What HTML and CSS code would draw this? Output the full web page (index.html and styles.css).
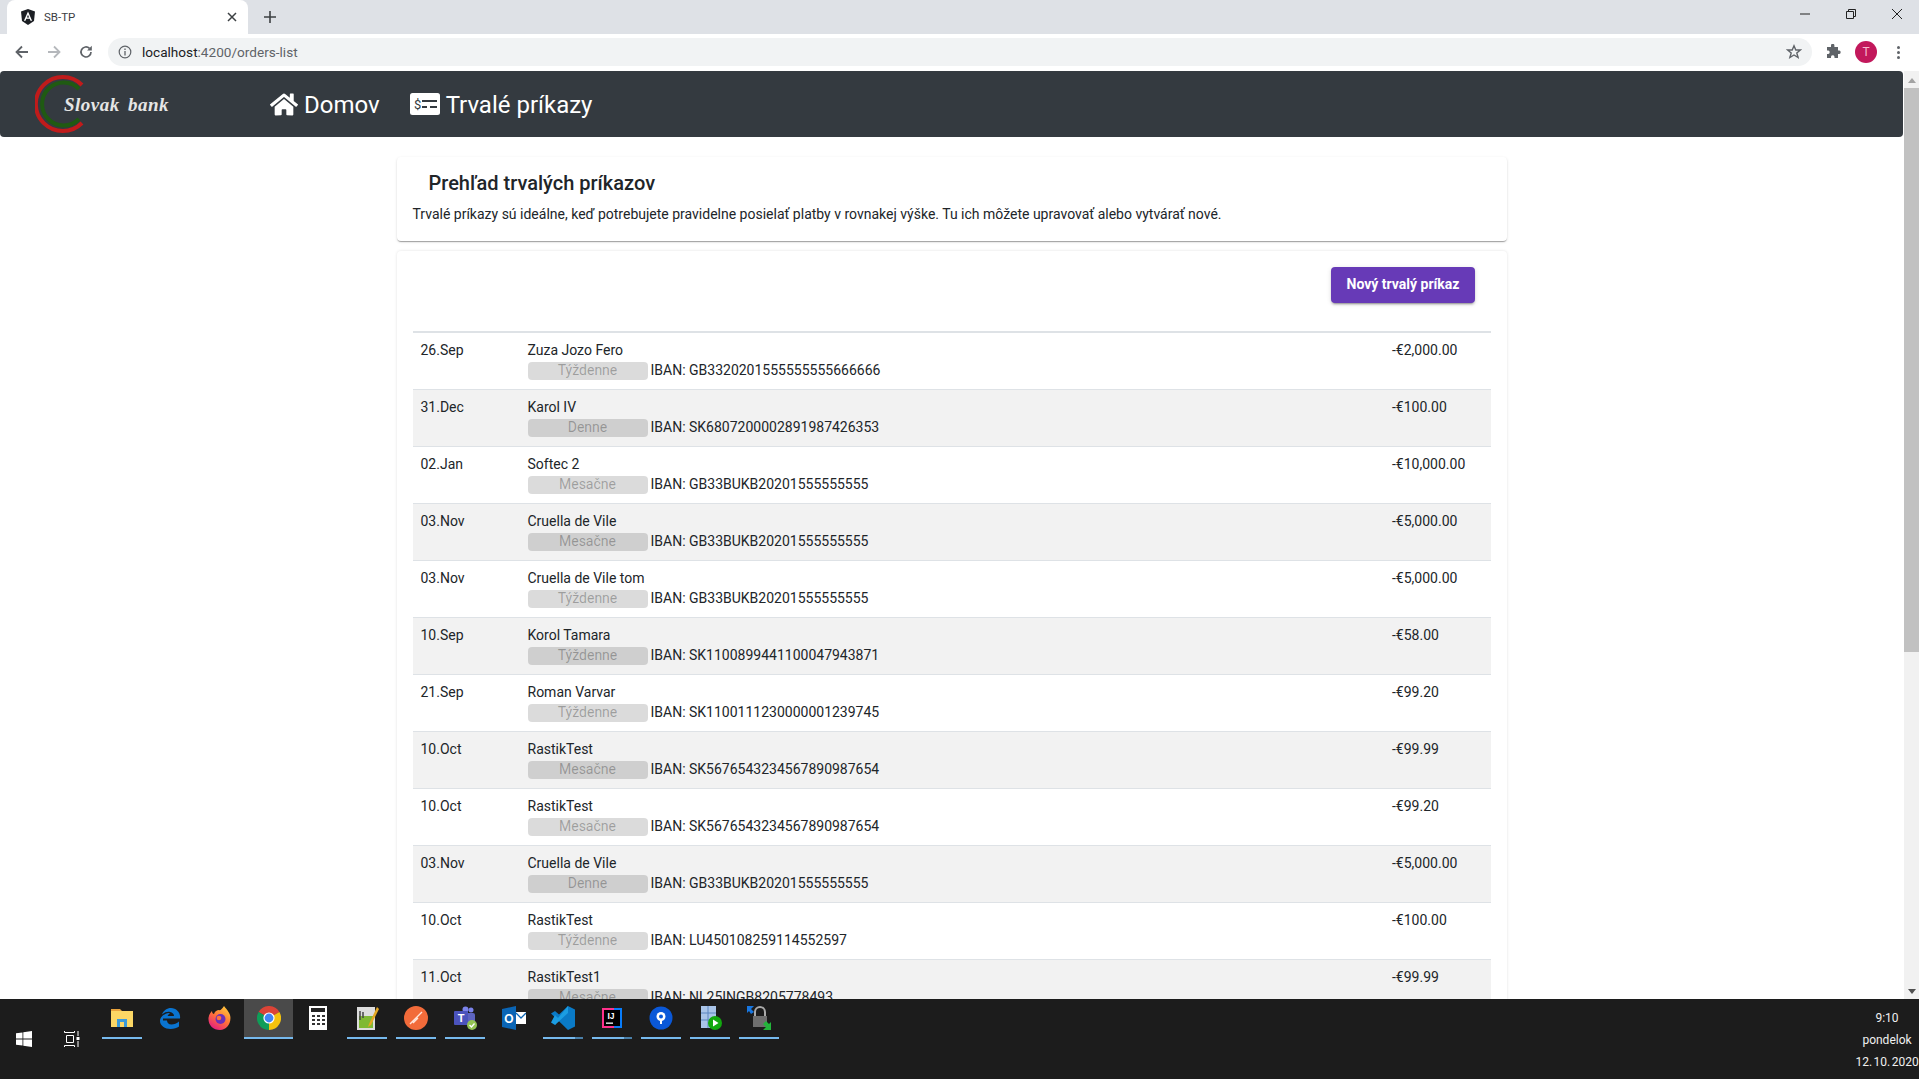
FILE: index.html
```html
<!DOCTYPE html>
<html>
<head>
<meta charset="utf-8">
<title>SB-TP</title>
<link rel="stylesheet" href="styles.css">
</head>
<body>
<div class="tabstrip">
  <div class="tab">
    <svg class="favicon" viewBox="0 0 16 16"><path d="M8 0 15 2.500 14 12 8 16 2 12 1 2.500Z" fill="#1c1f24"/><path d="M8 2.600 3.900 11.800H5.500L6.300 9.800H9.700L10.500 11.800H12.100ZM6.900 8.500 8 5.800 9.100 8.500Z" fill="#fff"/></svg>
    <span class="tabtitle">SB-TP</span>
    <svg class="tabclose" viewBox="0 0 10 10"><path d="M1 1 9 9M9 1 1 9" stroke="#3c4043" stroke-width="1.500"/></svg>
  </div>
  <svg class="newtab" viewBox="0 0 12 12"><path d="M6 0V12M0 6H12" stroke="#3c4043" stroke-width="1.600"/></svg>
  <div class="winbtns">
    <svg viewBox="0 0 12 12"><path d="M1 6H11" stroke="#222" stroke-width="1"/></svg>
    <svg viewBox="0 0 12 12"><path d="M1.500 3.500H8.500V10.500H1.500ZM3.500 3.500V1.500H10.500V8.500H8.500" fill="none" stroke="#222"/></svg>
    <svg viewBox="0 0 12 12"><path d="M1 1 11 11M11 1 1 11" stroke="#222"/></svg>
  </div>
</div>
<div class="toolbar">
  <svg class="navicon" viewBox="0 0 16 16"><path d="M14 8H3M8 2.500 2.500 8 8 13.500" fill="none" stroke="#5f6368" stroke-width="1.800"/></svg>
  <svg class="navicon" viewBox="0 0 16 16"><path d="M2 8H13M8 2.500 13.500 8 8 13.500" fill="none" stroke="#b5b8bc" stroke-width="1.800"/></svg>
  <svg class="navicon" viewBox="0 0 16 16"><path d="M13 8A5 5 0 1 1 11.500 4.400" fill="none" stroke="#5f6368" stroke-width="1.700"/><path d="M13.800 1.800V6.500H9.100Z" fill="#5f6368"/></svg>
  <div class="omnibox">
    <svg class="infoicon" viewBox="0 0 14 14"><circle cx="7" cy="7" r="5.800" fill="none" stroke="#5f6368" stroke-width="1.200"/><path d="M7 6V10.500M7 3.500V5" stroke="#5f6368" stroke-width="1.300"/></svg>
    <span class="url"><b>localhost</b>:4200/orders-list</span>
    <svg class="staricon" viewBox="0 0 16 16"><path d="M8 1.800 9.800 6H14.400L10.800 8.900 12.100 13.500 8 11 3.900 13.500 5.200 8.900 1.600 6H6.200Z" fill="none" stroke="#5f6368" stroke-width="1.400"/></svg>
  </div>
  <svg class="exticon" viewBox="0 0 16 16"><path d="M6 1.500A1.700 1.700 0 0 1 9.400 1.500V3H13V6.500H14.300A1.800 1.800 0 0 1 14.300 10H13V14H9.500V12.700A1.800 1.800 0 0 0 6 12.700V14H2V10H3.300A1.800 1.800 0 0 0 3.300 6.500H2V3H6Z" fill="#5f6368"/></svg>
  <div class="avatar">T</div>
  <div class="menudots"><i></i><i></i><i></i></div>
</div>
<div class="viewport">
  <div class="page">
    <div class="navbar">
      <div class="brand">
        <svg class="brandmark" viewBox="0 0 56 60"><path d="M47 11A27 27 0 1 0 47 49" fill="none" stroke="#c01b1b" stroke-width="4"/><path d="M44 15A21.500 21.500 0 1 0 44 45" fill="none" stroke="#1f5a12" stroke-width="4"/></svg>
        <span class="brandname">Slovak bank</span>
      </div>
      <a class="navlink homelink"><svg class="homeicon" viewBox="0 0 576 512"><path fill="#fff" d="M280.370 148.260L96 300.110V464a16 16 0 0 0 16 16l112.060-.29a16 16 0 0 0 15.920-16V368a16 16 0 0 1 16-16h64a16 16 0 0 1 16 16v95.640a16 16 0 0 0 16 16.050L464 480a16 16 0 0 0 16-16V300L295.670 148.260a12.190 12.190 0 0 0-15.300 0zM571.600 251.470L488 182.560V44.050a12 12 0 0 0-12-12h-56a12 12 0 0 0-12 12v72.610L318.470 43a48 48 0 0 0-61 0L4.340 251.470a12 12 0 0 0-1.600 16.900l25.500 31A12 12 0 0 0 45.150 301l235.220-193.740a12.190 12.190 0 0 1 15.300 0L530.900 301a12 12 0 0 0 16.900-1.600l25.500-31a12 12 0 0 0-1.700-16.930z"/></svg>Domov</a>
      <a class="navlink"><svg class="checkicon" viewBox="0 0 30 22"><rect width="30" height="22" rx="2.500" fill="#fff"/><text x="4" y="15.500" class="dollar">$</text><path d="M12 8H27M12 14H17M20 14H27" stroke="#343a40" stroke-width="2"/></svg>Trvalé príkazy</a>
    </div>
    <div class="content">
      <div class="card introcard">
        <h2>Prehľad trvalých príkazov</h2>
        <p>Trvalé príkazy sú ideálne, keď potrebujete pravidelne posielať platby v rovnakej výške. Tu ich môžete upravovať alebo vytvárať nové.</p>
      </div>
      <div class="card listcard">
        <div class="actions"><button class="newbtn">Nový trvalý príkaz</button></div>
        <table class="orders">
          <tbody>
            <tr><td class="date">26.Sep</td><td><div class="name">Zuza Jozo Fero</div><div class="detail"><span class="badge">Týždenne</span>IBAN: GB3320201555555555666666</div></td><td class="amount">-€2,000.00</td></tr>
            <tr><td class="date">31.Dec</td><td><div class="name">Karol IV</div><div class="detail"><span class="badge">Denne</span>IBAN: SK6807200002891987426353</div></td><td class="amount">-€100.00</td></tr>
            <tr><td class="date">02.Jan</td><td><div class="name">Softec 2</div><div class="detail"><span class="badge">Mesačne</span>IBAN: GB33BUKB20201555555555</div></td><td class="amount">-€10,000.00</td></tr>
            <tr><td class="date">03.Nov</td><td><div class="name">Cruella de Vile</div><div class="detail"><span class="badge">Mesačne</span>IBAN: GB33BUKB20201555555555</div></td><td class="amount">-€5,000.00</td></tr>
            <tr><td class="date">03.Nov</td><td><div class="name">Cruella de Vile tom</div><div class="detail"><span class="badge">Týždenne</span>IBAN: GB33BUKB20201555555555</div></td><td class="amount">-€5,000.00</td></tr>
            <tr><td class="date">10.Sep</td><td><div class="name">Korol Tamara</div><div class="detail"><span class="badge">Týždenne</span>IBAN: SK1100899441100047943871</div></td><td class="amount">-€58.00</td></tr>
            <tr><td class="date">21.Sep</td><td><div class="name">Roman Varvar</div><div class="detail"><span class="badge">Týždenne</span>IBAN: SK1100111230000001239745</div></td><td class="amount">-€99.20</td></tr>
            <tr><td class="date">10.Oct</td><td><div class="name">RastikTest</div><div class="detail"><span class="badge">Mesačne</span>IBAN: SK5676543234567890987654</div></td><td class="amount">-€99.99</td></tr>
            <tr><td class="date">10.Oct</td><td><div class="name">RastikTest</div><div class="detail"><span class="badge">Mesačne</span>IBAN: SK5676543234567890987654</div></td><td class="amount">-€99.20</td></tr>
            <tr><td class="date">03.Nov</td><td><div class="name">Cruella de Vile</div><div class="detail"><span class="badge">Denne</span>IBAN: GB33BUKB20201555555555</div></td><td class="amount">-€5,000.00</td></tr>
            <tr><td class="date">10.Oct</td><td><div class="name">RastikTest</div><div class="detail"><span class="badge">Týždenne</span>IBAN: LU450108259114552597</div></td><td class="amount">-€100.00</td></tr>
            <tr><td class="date">11.Oct</td><td><div class="name">RastikTest1</div><div class="detail"><span class="badge">Mesačne</span>IBAN: NL25INGB8205778493</div></td><td class="amount">-€99.99</td></tr>
          </tbody>
        </table>
      </div>
    </div>
  </div>
  <div class="scrollbar">
    <div class="arrow up"></div>
    <div class="thumb"></div>
    <div class="arrow down"></div>
  </div>
</div>
<div class="taskbar">
  <div class="startbtn"><svg viewBox="0 0 16 16"><path fill="#fff" d="M0 2.300 6.500 1.400V7.600H0ZM7.300 1.300 16 0V7.600H7.300ZM0 8.400H6.500V14.600L0 13.700ZM7.300 8.400H16V16L7.300 14.700Z"/></svg></div>
  <div class="startbtn"><svg viewBox="0 0 16 16"><path fill="none" stroke="#fff" stroke-width="1" d="M.500 0V1.500H10.500V0M2.500 4.500H9.500V11.500H2.500ZM.500 16V14.500H10.500V16M14 0V5M14 10V16"/><rect x="12.500" y="6" width="3" height="3" fill="#fff"/></svg></div>
  <div class="tile open">
    <svg viewBox="0 0 24 24"><path d="M1 3H10L12 5H1Z" fill="#e8a33d"/><rect x="1" y="5" width="22" height="16" fill="#fbd765"/><path d="M7 21V13H17V21H14V16H10V21Z" fill="#3a9ad9"/></svg>
  </div>
  <div class="tile">
    <svg viewBox="0 0 24 24"><path d="M4 12.500H21C22 7 17.500 2 12 2 8 2 4.500 4.500 3 8.500 6 6 9 5.500 11 6 13.500 6.500 15 8 15 10H8.500C9.500 8.500 10 8 11 7 6 7 1 10.500 1 15 1 19.500 6 23 11.500 23 15 23 18 22 20 20.500V15.500C18 17.300 15 18.500 12.500 18.500 9.500 18.500 8 16.500 8 14.500H4Z" fill="#0a74d0"/></svg>
  </div>
  <div class="tile">
    <svg viewBox="0 0 24 24"><defs><linearGradient id="fxg" x1="0.800" y1="0" x2="0.200" y2="1"><stop offset="0" stop-color="#ffca3a"/><stop offset="0.500" stop-color="#ff7139"/><stop offset="1" stop-color="#e31587"/></linearGradient></defs><path d="M16 0C18 3 20 4 22 9 24 16 19 24 12 24 5 24 0 19 .500 12 1 8 3 6 4 5 4 7 5 8 6 8 7 5 9 4 11 4 12 5 14 3 16 0Z" fill="url(#fxg)"/><circle cx="12.500" cy="13" r="5" fill="#6b2fb8"/><circle cx="11" cy="12" r="2.300" fill="#ff7139"/></svg>
  </div>
  <div class="tile active">
    <svg viewBox="0 0 30 30"><path d="M2 7.500A15 15 0 0 1 28 7.500L15 15Z" fill="#db4437"/><path d="M28 7.500A15 15 0 0 1 15 30L15 15Z" fill="#f4c20d"/><path d="M15 30A15 15 0 0 1 2 7.500L15 15Z" fill="#0f9d58"/><circle cx="15" cy="15" r="7" fill="#fff"/><circle cx="15" cy="15" r="5.500" fill="#4285f4"/></svg>
  </div>
  <div class="tile">
    <svg viewBox="0 0 24 24"><rect x="3" width="18" height="24" fill="#fff"/><rect x="5" y="2" width="14" height="4" fill="#222"/><path d="M6 9H9V11H6ZM11 9H14V11H11ZM16 9H19V11H16ZM6 13H9V15H6ZM11 13H14V15H11ZM16 13H19V15H16ZM6 17H9V19H6ZM11 17H14V19H11ZM16 17H19V19H16Z" fill="#333"/></svg>
  </div>
  <div class="tile open">
    <svg viewBox="0 0 24 24"><rect x="2" y="1" width="18" height="23" fill="#ddd"/><rect x="4" y="10" width="14" height="12" fill="#7fb934"/><path d="M5 5V14M8 6V12" stroke="#444" stroke-width="1.500"/><path d="M22 1 14 18 13 21 16 19 24 3Z" fill="#e5a823"/></svg>
  </div>
  <div class="tile open">
    <svg viewBox="0 0 24 24"><circle cx="12" cy="12" r="12" fill="#f26b3a"/><path d="M6 18 18 6M9 17 14 12" stroke="#ffe6dc" stroke-width="1.400"/></svg>
  </div>
  <div class="tile open">
    <svg viewBox="0 0 24 24"><circle cx="18" cy="4" r="2.500" fill="#7b83eb"/><circle cx="12.500" cy="3.500" r="3" fill="#7b83eb"/><rect x="13" y="7" width="9" height="12" rx="2" fill="#5d64c0"/><rect x="1" y="5" width="14" height="14" rx="1" fill="#4b53bc"/><text x="8" y="16" class="teamst">T</text><circle cx="19" cy="19" r="5" fill="#92c353"/><path d="M16.500 19 18.500 21 21.500 17.500" fill="none" stroke="#fff" stroke-width="1.300"/></svg>
  </div>
  <div class="tile">
    <svg viewBox="0 0 24 24"><path d="M0 3 14 0V24L0 21Z" fill="#0a65b5"/><text x="7" y="16.500" class="outlooko">O</text><rect x="14" y="6" width="10" height="12" fill="#fff"/><path d="M14 7 19 12 24 7" fill="none" stroke="#0a65b5" stroke-width="1.300"/></svg>
  </div>
  <div class="tile open part">
    <svg viewBox="0 0 24 24"><path d="M17 0 24 3.500V20.500L17 24 0 7.500 4 5 8 8.500Z" fill="#0a7ac6"/><path d="M17 24 0 16.500 4 19 17 7V0L7 12 4 9 0 16.500Z" fill="#1b9de2"/></svg>
  </div>
  <div class="tile open part">
    <svg viewBox="0 0 24 24"><path d="M2 2H14V4H4V20H14V22H2Z" fill="#ff318c"/><path d="M14 2H22V22H14V20H20V4H14Z" fill="#087cfa"/><rect x="4" y="4" width="16" height="16" fill="#000"/><text x="11" y="13" class="ideatext">IJ</text><rect x="6" y="16.500" width="7" height="1.300" fill="#fff"/></svg>
  </div>
  <div class="tile open">
    <svg viewBox="0 0 24 24"><circle cx="12" cy="12" r="11.500" fill="#0a58d8"/><circle cx="12" cy="10.500" r="4.500" fill="#fff"/><circle cx="12" cy="10.500" r="2" fill="#0a58d8"/><rect x="11" y="14" width="2" height="4" fill="#fff"/></svg>
  </div>
  <div class="tile open">
    <svg viewBox="0 0 24 24"><rect x="3" y="0" width="15" height="22" fill="#a9c4e8"/><path d="M3 7H18M3 14H18M10 0V22" stroke="#5c86c0"/><circle cx="17" cy="17" r="7" fill="#12a90f"/><path d="M15 13.500 20.500 17 15 20.500Z" fill="#fff"/></svg>
  </div>
  <div class="tile open">
    <svg viewBox="0 0 24 24"><path d="M0 0H7L4 3 7 6 4 8 2 5 0 7Z" fill="#1776e0"/><path d="M8 11V6A5 5 0 0 1 18 6V11" fill="none" stroke="#aaa" stroke-width="2"/><rect x="6" y="10" width="14" height="11" fill="#6e6e6e"/><path d="M24 24H16L19 21 16 18 19 15 22 18 24 16Z" fill="#22b53a"/></svg>
  </div>
  <div class="clock"><span>9:10</span><span>pondelok</span><span>12. 10. 2020</span></div>
</div>
</body>
</html>
```

FILE: styles.css
```css
* {
  box-sizing: border-box;
}
html, body {
  margin: 0;
  height: 100%;
  overflow: hidden;
}
body {
  display: flex;
  flex-direction: column;
  font-family: Roboto, "Liberation Sans", sans-serif;
  font-size: 14px;
  color: #212529;
  background: #fff;
}

/* browser chrome */
.tabstrip {
  display: flex;
  align-items: flex-end;
  height: 34px;
  padding-left: 7px;
  background: #dee1e6;
  flex: none;
}
.tab {
  display: flex;
  align-items: center;
  width: 241px;
  height: 34px;
  padding: 0 11px 0 13px;
  background: #fff;
  border-radius: 8px 8px 0 0;
}
.favicon {
  width: 16px;
  height: 16px;
}
.tabtitle {
  flex: 1;
  margin-left: 8px;
  font-size: 11.5px;
  color: #3c4043;
}
.tabclose {
  width: 10px;
  height: 10px;
}
.newtab {
  width: 12px;
  height: 12px;
  margin: 0 auto 11px 16px;
}
.winbtns {
  display: flex;
  gap: 34px;
  align-self: flex-start;
  padding: 8px 16px 0 0;
}
.winbtns svg {
  width: 12px;
  height: 12px;
}
.toolbar {
  display: flex;
  align-items: center;
  height: 36px;
  padding-left: 14px;
  flex: none;
  background: #fff;
}
.navicon {
  width: 16px;
  height: 16px;
  margin-right: 16px;
}
.omnibox {
  display: flex;
  align-items: center;
  width: 1704px;
  height: 28px;
  margin-left: -2px;
  padding: 0 10px 0 10px;
  background: #f1f3f4;
  border-radius: 14px;
}
.infoicon {
  width: 14px;
  height: 14px;
}
.url {
  flex: 1;
  margin-left: 10px;
  font-size: 13.6px;
  color: #5f6368;
}
.url b {
  font-weight: 400;
  color: #202124;
}
.staricon {
  width: 16px;
  height: 16px;
}
.exticon {
  width: 16px;
  height: 16px;
  margin-left: 13px;
}
.avatar {
  width: 22px;
  height: 22px;
  margin-left: 14px;
  border-radius: 50%;
  background: #c2185b;
  color: #f8bbd0;
  font-size: 12px;
  line-height: 22px;
  text-align: center;
}
.menudots {
  display: flex;
  flex-direction: column;
  gap: 2px;
  margin-left: 20px;
}
.menudots i {
  width: 3px;
  height: 3px;
  border-radius: 50%;
  background: #5f6368;
}

/* page */
.viewport {
  display: flex;
  flex: 1;
  min-height: 0;
  margin-top: 1px;
}
.page {
  flex: 1;
  min-width: 0;
  overflow: hidden;
}
.navbar {
  display: flex;
  align-items: center;
  height: 66px;
  padding: 2px 0 0 35px;
  background: #343a40;
  border-radius: 4px;
}
.navbar svg {
  margin-top: -2px;
}
.brand {
  display: flex;
  align-items: center;
  width: 235px;
}
.brandmark {
  width: 56px;
  height: 60px;
  flex: none;
}
.brandname {
  margin-left: -27px;
  font-family: "Liberation Serif", serif;
  font-size: 19px;
  font-style: italic;
  font-weight: 700;
  letter-spacing: .5px;
  word-spacing: 3px;
  color: #e6e6e6;
}
.navlink {
  display: flex;
  align-items: center;
  margin-right: 30px;
  font-size: 24px;
  color: #fff;
}
.homeicon {
  width: 28px;
  height: 25px;
  margin-right: 6px;
}
.checkicon {
  width: 30px;
  height: 22px;
  margin-right: 6px;
}
.dollar {
  font-size: 13px;
  font-family: Roboto, sans-serif;
  fill: #343a40;
}
.content {
  width: 1110.5px;
  margin: 20px 0 0 396.5px;
}
.card {
  background: #fff;
  border-radius: 4px;
}
.introcard {
  height: 84px;
  padding: 10px 16px 0;
  box-shadow: 0 2px 1px -1px rgba(0,0,0,.2), 0 1px 1px 0 rgba(0,0,0,.14), 0 1px 3px 0 rgba(0,0,0,.12);
}
.introcard h2 {
  margin: 0 0 0 16px;
  font-size: 20px;
  font-weight: 500;
  line-height: 32px;
}
.introcard p {
  margin: 5px 0 0;
  line-height: 20px;
}
.listcard {
  margin-top: 10px;
  padding: 16px 16px 0;
  box-shadow: 0 0 3px rgba(0,0,0,.12);
}
.actions {
  display: flex;
  justify-content: flex-end;
  height: 64px;
  padding-right: 16px;
}
.newbtn {
  width: 144px;
  height: 36px;
  padding: 0 0 2px;
  border: 0;
  border-radius: 4px;
  background: #673ab7;
  color: #fff;
  font-family: Roboto, sans-serif;
  font-size: 14px;
  font-weight: 700;
  box-shadow: 0 3px 1px -2px rgba(0,0,0,.2), 0 2px 2px 0 rgba(0,0,0,.14), 0 1px 5px 0 rgba(0,0,0,.12);
}
.orders {
  width: 100%;
  border-collapse: separate;
  border-spacing: 0;
  border-top: 2px solid #dee2e6;
}
.orders tr:nth-child(even) {
  background: #f2f2f2;
}
.orders td {
  height: 57px;
  padding: 7px 0 9px;
  border-bottom: 1px solid #dee2e6;
  line-height: 20px;
  vertical-align: top;
}
.orders td.date {
  width: 115px;
  padding-left: 8px;
}
.orders td.amount {
  width: 99px;
}
.name {
  height: 22px;
}
.detail {
  display: flex;
  gap: 3px;
  height: 18px;
  line-height: 17px;
}
.badge {
  width: 120px;
  height: 18px;
  border-radius: 4px;
  background: rgba(0,0,0,.14);
  color: rgba(0,0,0,.28);
  text-align: center;
}
.scrollbar {
  display: flex;
  flex-direction: column;
  align-items: center;
  width: 15px;
  margin-left: 1px;
  background: #f1f1f1;
}
.arrow {
  width: 0;
  height: 0;
  margin: 7px 0 5px;
  border-left: 4px solid transparent;
  border-right: 4px solid transparent;
}
.arrow.up {
  border-bottom: 5px solid #a3a3a3;
}
.arrow.down {
  margin: auto 0 5px;
  border-top: 5px solid #505050;
}
.thumb {
  width: 100%;
  height: 564px;
  background: #c1c1c1;
}

/* windows taskbar */
.taskbar {
  display: flex;
  align-items: flex-start;
  height: 80px;
  flex: none;
  padding-right: 1px;
  background: #1c1c1c;
}
.startbtn {
  display: flex;
  align-items: center;
  justify-content: center;
  width: 48px;
  height: 80px;
  flex: none;
}
.startbtn svg {
  width: 16px;
  height: 16px;
}
.tile {
  position: relative;
  display: flex;
  justify-content: center;
  width: 49px;
  height: 40px;
  padding-top: 7px;
  flex: none;
}
.startbtn + .tile {
  margin-left: 1px;
}
.tile svg {
  width: 24px;
  height: 24px;
}
.tile.open::after, .tile.active::after {
  content: "";
  position: absolute;
  left: 5px;
  right: 4px;
  bottom: 0;
  height: 2px;
  background: #76b9ed;
}
.tile.part::after {
  background: linear-gradient(to right, #76b9ed 80%, #4a7fa8 80%);
}
.tile.active {
  background: #4a4a4a;
}
.tile.active::after {
  left: 0;
  right: 0;
}
.teamst, .outlooko, .ideatext {
  fill: #fff;
  font-family: "Liberation Sans", sans-serif;
  font-weight: 700;
  text-anchor: middle;
}
.teamst {
  font-size: 11px;
}
.outlooko {
  font-size: 12px;
}
.ideatext {
  font-size: 8.500px;
}
.clock {
  display: flex;
  flex-direction: column;
  align-items: center;
  width: 62px;
  margin-left: auto;
  padding-top: 8px;
  color: #f0f0f0;
  font-family: Roboto, sans-serif;
  font-size: 12px;
  line-height: 22px;
  word-spacing: -1.5px;
  white-space: nowrap;
}
```
